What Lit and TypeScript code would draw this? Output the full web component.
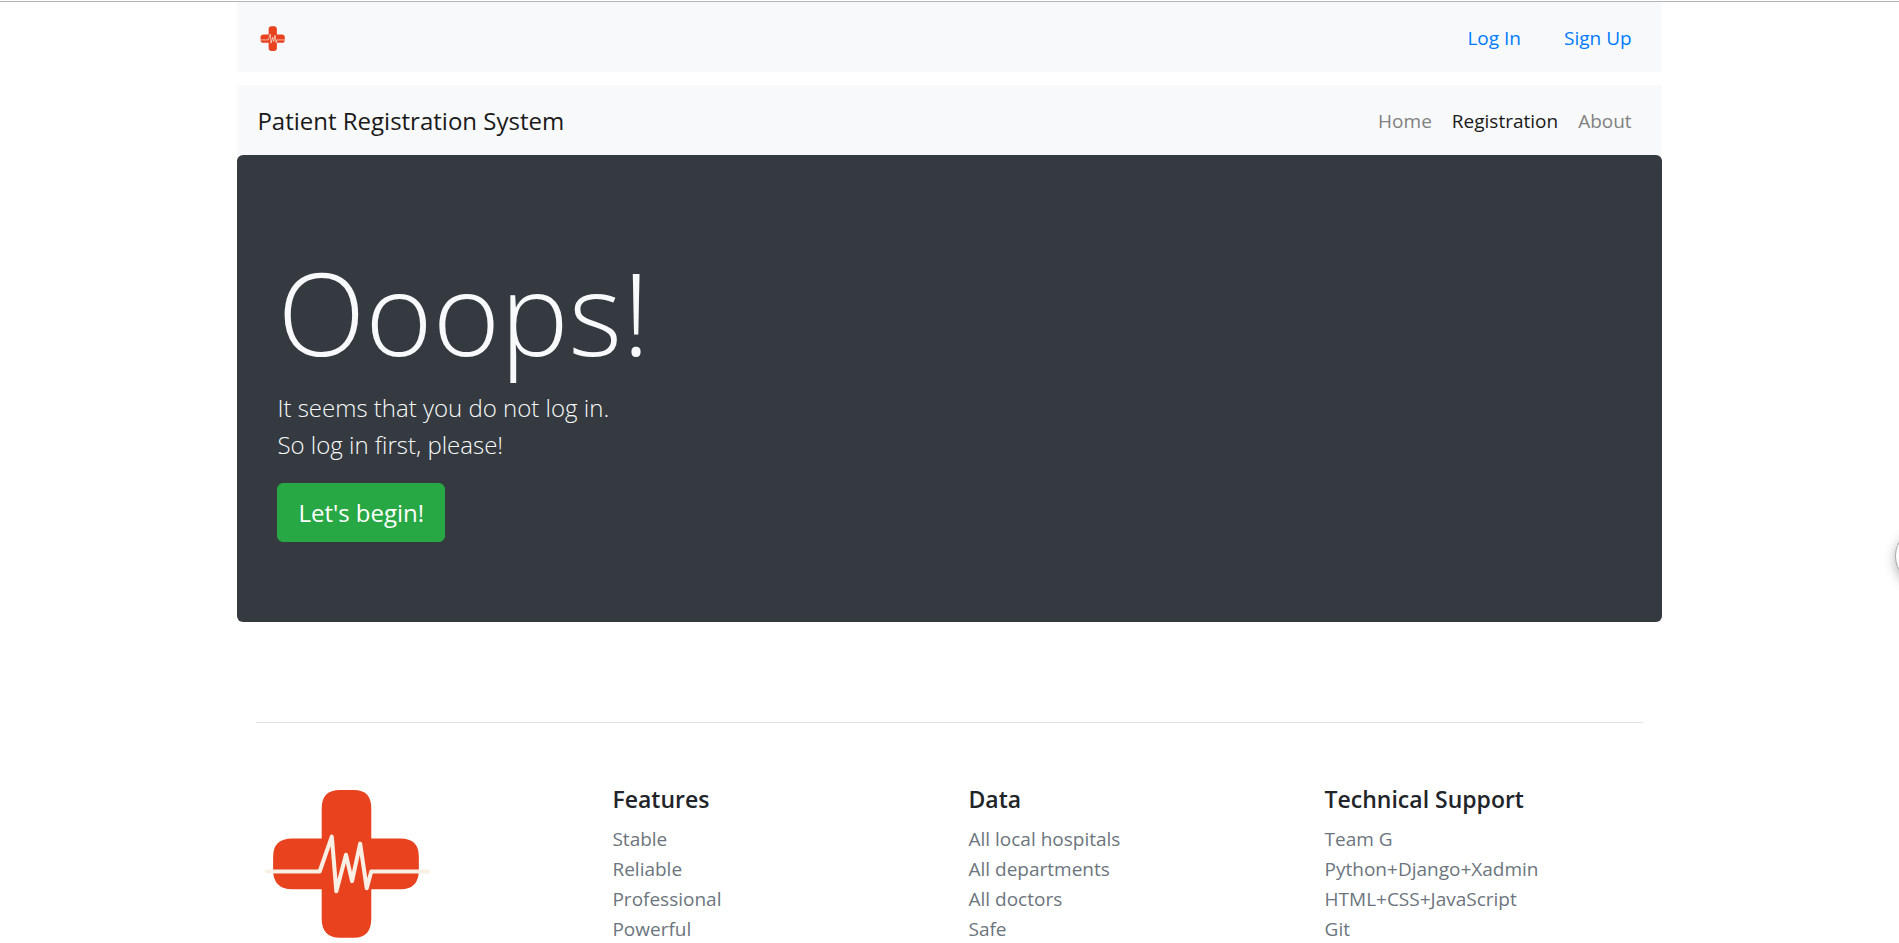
import { LitElement, html, css } from "lit";
import { customElement, property } from "lit/decorators.js";

@customElement("medical-cross")
export class MedicalCross extends LitElement {
  static styles = css`
    :host {
      display: block;
    }
    .mark {
      display: block;
      width: 100%;
      height: auto;
    }
  `;

  render() {
    return html`
      <svg class="mark" viewBox="0 0 166 150" role="img" aria-label="Medical cross">
        <path
          fill="#e8421f"
          d="M75 2h14q17 0 17 18v30h29q18 0 18 18v13q0 19-18 19h-29v29q0 19-17 19H75q-18 0-18-19v-29H28q-19 0-19-19V68q0-18 19-18h29V20q0-18 18-18z"
        />
        <path
          fill="none"
          stroke="#f8f0e4"
          stroke-width="4"
          stroke-linecap="round"
          stroke-linejoin="round"
          d="M3 82.500h52L67 48l4.500 54L81 66l6 26 8-37 6.500 44 4.500-16.500h56"
        />
      </svg>
    `;
  }
}

interface NavItem {
  label: string;
  active?: boolean;
}

@customElement("footer-list")
export class FooterList extends LitElement {
  @property() heading = "";
  @property({ attribute: false }) items: string[] = [];

  static styles = css`
    :host {
      display: block;
      padding: 0 19px;
    }
    .heading {
      margin: 0 0 10px;
      font-size: 23px;
      line-height: 30px;
      font-weight: 600;
      color: #212529;
    }
    .list {
      margin: 0;
      padding: 0;
      list-style: none;
      line-height: 30px;
    }
    .link {
      color: #6c757d;
      text-decoration: none;
    }
  `;

  render() {
    return html`
      <h5 class="heading">${this.heading}</h5>
      <ul class="list">
        ${this.items.map((item) => html`<li><a class="link" href="#">${item}</a></li>`)}
      </ul>
    `;
  }
}

@customElement("app-root")
export class AppRoot extends LitElement {
  private nav: NavItem[] = [
    { label: "Home" },
    { label: "Registration", active: true },
    { label: "About" },
  ];

  private columns = [
    { heading: "Features", items: ["Stable", "Reliable", "Professional", "Powerful"] },
    { heading: "Data", items: ["All local hospitals", "All departments", "All doctors", "Safe"] },
    {
      heading: "Technical Support",
      items: ["Team G", "Python+Django+Xadmin", "HTML+CSS+JavaScript", "Git"],
    },
  ];

  static styles = css`
    :host {
      display: block;
      box-sizing: border-box;
      min-height: 100vh;
      overflow-x: clip;
      padding-top: 1px;
      background: #fff;
      color: #212529;
      font-family: "Segoe UI", "Open Sans", "Noto Sans", sans-serif;
      font-size: 19px;
      line-height: 30px;
    }
    .page {
      border-top: 1px solid #b1b5b5;
    }
    .container {
      width: 75%;
      margin: 0 auto;
    }
    .bar {
      display: flex;
      align-items: center;
      justify-content: space-between;
      box-sizing: border-box;
      min-height: 70px;
      padding: 12px 30px 10px 20px;
      background: #f8f9fa;
    }
    .account {
      margin-bottom: 13px;
    }
    .logo-link {
      display: block;
      width: 28px;
      padding: 2px 2px 0;
    }
    .links {
      display: flex;
      gap: 20px;
    }
    .account .links {
      gap: 43px;
    }
    .link {
      color: #007bff;
      text-decoration: none;
    }
    .brand {
      color: #1a1a1a;
      font-size: 24px;
      text-decoration: none;
    }
    .nav-link {
      color: #808181;
      text-decoration: none;
    }
    .nav-link.active {
      color: #191919;
    }
    .hero {
      padding: 80px 40px;
      border-radius: 6px;
      background: #343a40;
      color: #f8f9fa;
    }
    .title {
      margin: 0 0 5px;
      padding-top: 5px;
      font-size: 115px;
      line-height: 144px;
      font-weight: 300;
    }
    .lead {
      margin: 0 0 20px;
      font-size: 24px;
      line-height: 37px;
      font-weight: 300;
    }
    .begin {
      display: block;
      padding: 10px 20px;
      border: 1px solid #28a745;
      border-radius: 6px;
      background: #28a745;
      color: #fff;
      font-family: inherit;
      font-size: 24px;
      line-height: 37px;
      cursor: pointer;
    }
    .divider {
      margin: 100px 19px 0;
      border: 0;
      border-top: 1px solid #dee2e6;
    }
    .footer {
      display: grid;
      grid-template-columns: repeat(4, 1fr);
      padding-top: 61px;
    }
    .footer-logo {
      width: 168px;
      padding: 4px 0 0 27px;
    }
    .float {
      position: fixed;
      top: 528px;
      right: -52px;
      box-sizing: border-box;
      width: 56px;
      height: 56px;
      padding: 0;
      border: 1px solid #a8a8a8;
      border-radius: 50%;
      background: #fff;
      box-shadow: 0 4px 12px rgba(0, 0, 0, 0.3);
    }
  `;

  render() {
    return html`
      <div class="page">
        <div class="container">
          <header class="bar account">
            <a class="logo-link" href="#" aria-label="Main page"><medical-cross></medical-cross></a>
            <div class="links">
              <a class="link" href="#">Log In</a>
              <a class="link" href="#">Sign Up</a>
            </div>
          </header>
          <nav class="bar">
            <a class="brand" href="#">Patient Registration System</a>
            <div class="links">
              ${this.nav.map(
                (item) => html`<a class="nav-link ${item.active ? "active" : ""}" href="#">${item.label}</a>`
              )}
            </div>
          </nav>
          <main class="hero">
            <h1 class="title">Ooops!</h1>
            <p class="lead">It seems that you do not log in.<br />So log in first, please!</p>
            <button class="begin" type="button">Let's begin!</button>
          </main>
          <hr class="divider" />
          <footer class="footer">
            <medical-cross class="footer-logo"></medical-cross>
            ${this.columns.map(
              (column) => html`<footer-list .heading=${column.heading} .items=${column.items}></footer-list>`
            )}
          </footer>
        </div>
      </div>
      <button class="float" type="button" aria-label="Open panel"></button>
    `;
  }
}
